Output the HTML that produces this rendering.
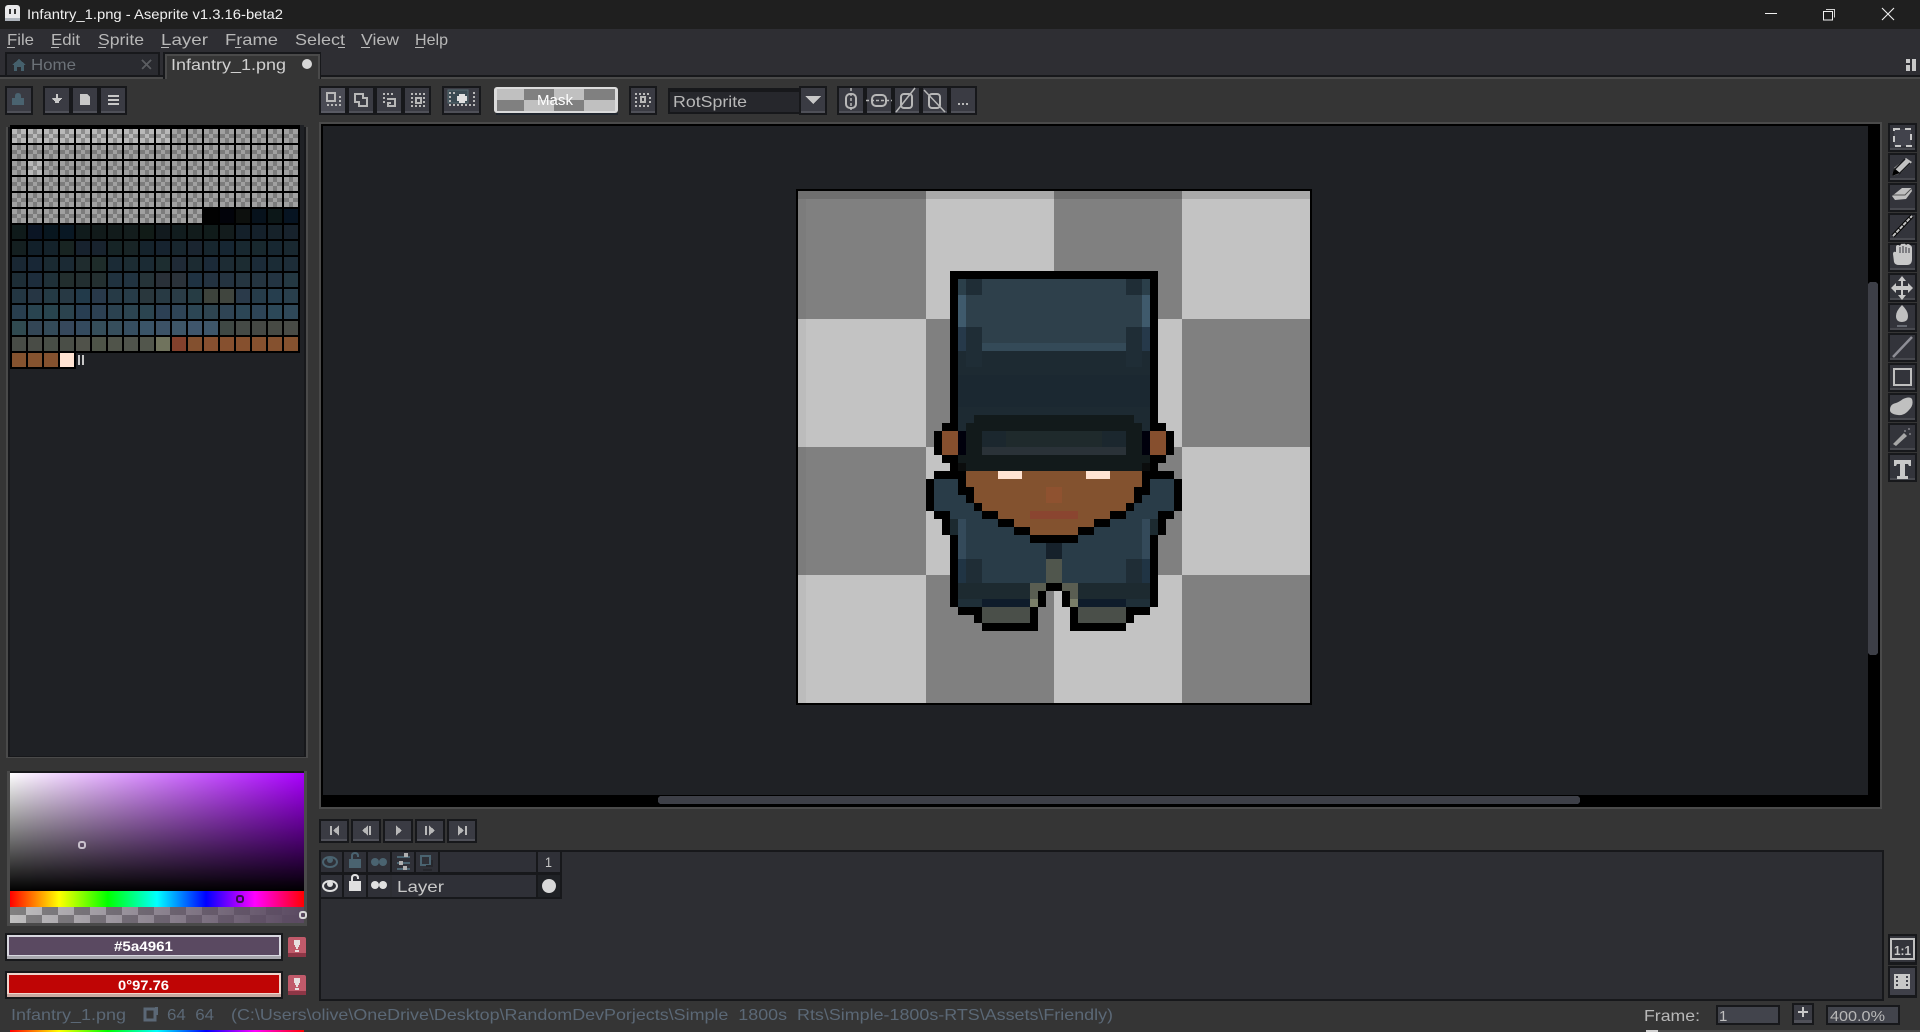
<!DOCTYPE html>
<html><head><meta charset="utf-8"><title>Infantry_1.png - Aseprite v1.3.16-beta2</title>
<style>
html,body{margin:0;padding:0;background:#353535;overflow:hidden}
svg{display:block}
text{font-family:"Liberation Sans",sans-serif;font-size:15px;fill:#b8b8b8;white-space:pre}
.s rect{width:14px;height:14px}
.c{fill:none;stroke:#b8b8b8;stroke-width:2}
</style></head><body>
<svg xmlns="http://www.w3.org/2000/svg" width="1920" height="1032" viewBox="0 0 1920 1032" shape-rendering="crispEdges">
<defs>
<linearGradient id="hue" x1="0" x2="1" y1="0" y2="0"><stop offset="0" stop-color="#f00"/><stop offset=".167" stop-color="#ff0"/><stop offset=".333" stop-color="#0f0"/><stop offset=".5" stop-color="#0ff"/><stop offset=".667" stop-color="#00f"/><stop offset=".833" stop-color="#f0f"/><stop offset="1" stop-color="#f00"/></linearGradient>
<linearGradient id="sv1" x1="0" x2="1" y1="0" y2="0"><stop offset="0" stop-color="#fff"/><stop offset="1" stop-color="#aa00ff"/></linearGradient>
<linearGradient id="sv2" x1="0" x2="0" y1="0" y2="1"><stop offset="0" stop-color="#000" stop-opacity="0"/><stop offset="1" stop-color="#000"/></linearGradient>
<linearGradient id="al" x1="0" x2="1" y1="0" y2="0"><stop offset="0" stop-color="#5a4961" stop-opacity="0"/><stop offset="1" stop-color="#5a4961"/></linearGradient>
<pattern id="alc" width="32" height="16" patternUnits="userSpaceOnUse" x="10" y="907"><rect width="32" height="16" fill="#808080"/><rect x="16" width="16" height="8" fill="#c0c0c0"/><rect y="8" width="16" height="8" fill="#c0c0c0"/></pattern>
<pattern id="sw" width="16" height="16" patternUnits="userSpaceOnUse" x="12" y="129"><rect width="16" height="16" fill="#000"/><rect width="14" height="14" fill="#a0a0a0"/><rect x="5" width="4" height="5" fill="#7c7c7c"/><rect y="5" width="5" height="4" fill="#7c7c7c"/><rect x="9" y="5" width="5" height="4" fill="#7c7c7c"/><rect x="5" y="9" width="4" height="5" fill="#7c7c7c"/></pattern>
<pattern id="sw2" width="16" height="16" patternUnits="userSpaceOnUse" x="12" y="129"><rect width="16" height="16" fill="#000"/><rect width="14" height="14" fill="#b8b8b8"/><rect x="5" width="4" height="5" fill="#8c8c8c"/><rect y="5" width="5" height="4" fill="#8c8c8c"/><rect x="9" y="5" width="5" height="4" fill="#8c8c8c"/><rect x="5" y="9" width="4" height="5" fill="#8c8c8c"/></pattern>
<g id="b"><rect width="28" height="29" fill="#17181b"/><rect x="2" y="2" width="24" height="23" fill="#3a3b43"/><rect x="2" y="25" width="24" height="2" fill="#4f5058"/></g>
<g id="bh"><rect width="28" height="29" fill="#17181b"/><rect x="2" y="2" width="24" height="23" fill="#4a4b54"/><rect x="2" y="25" width="24" height="2" fill="#5a5b64"/></g>
<g id="tb"><rect width="29" height="29" fill="#17181b"/><rect x="2" y="2" width="25" height="25" fill="#33343b"/><rect x="2" y="25" width="25" height="2" fill="#48494f"/></g>
<g id="ab"><rect width="30" height="24" fill="#17181b"/><rect x="2" y="2" width="26" height="18" fill="#3a3b43"/><rect x="2" y="20" width="26" height="2" fill="#4f5058"/></g>
<g id="warn"><rect width="18" height="20" rx="2" fill="#c05a6a" shape-rendering="auto"/><rect y="16" width="18" height="4" fill="#8d3646"/><rect x="6" y="3" width="6" height="5" fill="#e8e0e0"/><rect x="7" y="8" width="4" height="2" fill="#e8e0e0"/><rect x="8" y="10" width="2" height="2" fill="#e8e0e0"/><rect x="7" y="13" width="4" height="2" fill="#e8e0e0"/></g>
</defs>

<!-- backgrounds -->
<rect width="1920" height="1032" fill="#353535"/>
<rect width="1920" height="29" fill="#1f1f1f"/>
<rect y="29" width="1920" height="46" fill="#2e2e33"/>

<!-- title bar -->
<rect x="5" y="5" width="15" height="16" rx="3" fill="#e8e8ea" shape-rendering="auto"/>
<rect x="5" y="18" width="15" height="3" fill="#aeb4bc"/>
<rect x="9" y="9" width="2" height="5" fill="#333"/><rect x="14" y="9" width="2" height="5" fill="#333"/>
<text x="27" y="19" textLength="256" lengthAdjust="spacingAndGlyphs" style="fill:#f0f0f0;font-size:14px">Infantry_1.png - Aseprite v1.3.16-beta2</text>
<rect x="1765" y="13" width="12" height="1" fill="#f0f0f0"/>
<rect x="1823.500" y="11.500" width="9" height="8.500" fill="none" stroke="#f0f0f0"/><path d="M1826 9.500h8.500v8" fill="none" stroke="#d0d0d0"/>
<path d="M1882 8l12 12M1894 8l-12 12" stroke="#f0f0f0" stroke-width="1.100" shape-rendering="auto"/>

<!-- menu -->
<g style="font-size:16px">
<text x="7" y="45" textLength="27" lengthAdjust="spacingAndGlyphs" style="font-size:16px">File</text>
<text x="51" y="45" textLength="29" lengthAdjust="spacingAndGlyphs" style="font-size:16px">Edit</text>
<text x="98" y="45" textLength="46" lengthAdjust="spacingAndGlyphs" style="font-size:16px">Sprite</text>
<text x="161" y="45" textLength="47" lengthAdjust="spacingAndGlyphs" style="font-size:16px">Layer</text>
<text x="225" y="45" textLength="53" lengthAdjust="spacingAndGlyphs" style="font-size:16px">Frame</text>
<text x="295" y="45" textLength="50" lengthAdjust="spacingAndGlyphs" style="font-size:16px">Select</text>
<text x="361" y="45" textLength="38" lengthAdjust="spacingAndGlyphs" style="font-size:16px">View</text>
<text x="415" y="45" textLength="33" lengthAdjust="spacingAndGlyphs" style="font-size:16px">Help</text>
</g>
<g fill="#b8b8b8"><rect x="7" y="47" width="8" height="1"/><rect x="51" y="47" width="8" height="1"/><rect x="98" y="47" width="8" height="1"/><rect x="161" y="47" width="8" height="1"/><rect x="235" y="47" width="6" height="1"/><rect x="338" y="47" width="7" height="1"/><rect x="361" y="47" width="9" height="1"/><rect x="415" y="47" width="9" height="1"/></g>

<!-- tabs -->
<rect x="0" y="75" width="1920" height="2" fill="#17181b"/>
<rect x="0" y="77" width="1920" height="2" fill="#4a4a4a"/>
<rect x="5" y="52" width="155" height="23" fill="#17181b"/>
<rect x="7" y="54" width="151" height="21" fill="#2a2b30"/>
<path d="M12 65l7-6 7 6h-2v6h-3v-4h-4v4h-3v-6z" fill="#45606c"/>
<text x="31" y="70" textLength="45" lengthAdjust="spacingAndGlyphs" style="fill:#6c7278;font-size:16px">Home</text>
<path d="M142 60l9 9M151 60l-9 9" stroke="#5a5c60" stroke-width="1.500"/>
<rect x="163" y="52" width="158" height="27" fill="#17181b"/>
<rect x="165" y="54" width="155" height="25" fill="#4a4a4a"/>
<rect x="167" y="56" width="151" height="23" fill="#353535"/>
<text x="171" y="70" textLength="115" lengthAdjust="spacingAndGlyphs" style="fill:#d0d0d0;font-size:16px">Infantry_1.png</text>
<circle cx="307" cy="64" r="5" fill="#d8d8d8" shape-rendering="auto"/>
<g fill="#c8c8c8"><rect x="1906" y="59" width="4" height="4"/><rect x="1906" y="65" width="4" height="6"/><rect x="1912" y="59" width="4" height="12"/></g>

<!-- left toolbar -->
<use href="#b" x="5" y="86"/>
<path d="M15 98v-2q0-3 3-3t3 3v2h3v7h-12v-7z" fill="#4a6370" shape-rendering="auto"/>
<use href="#b" x="43" y="86"/><use href="#b" x="71" y="86"/><use href="#b" x="99" y="86"/>
<g fill="#c8c8c8"><rect x="56" y="94" width="2" height="9"/><path d="M52 98h10v1h-1v1h-1v1h-1v2h-4v-2h-1v-1h-1z"/><path d="M80 94h7l3 3v8h-10z"/><rect x="108" y="95" width="11" height="2"/><rect x="108" y="99" width="11" height="2"/><rect x="108" y="103" width="11" height="2"/></g>

<!-- top toolbar -->
<use href="#bh" x="319" y="86"/><use href="#b" x="347" y="86"/><use href="#b" x="375" y="86"/><use href="#b" x="403" y="86"/>
<rect x="327" y="93" width="8" height="8" class="c"/>
<path d="M327 105h2M331 105h2M335 105h2M339 105h2M339 101h2M339 97h2" stroke="#b8b8b8" stroke-width="2"/>
<path d="M355 94h8v4h4v8h-8v-4h-4z" class="c"/>
<path d="M383 94h2M387 94h2M391 94h2M383 98h2M383 102h2" stroke="#b8b8b8" stroke-width="2"/><path d="M387 99h8v7h-7v-3h3" class="c"/>
<path d="M411 94h14M411 98h2M423 98h2M411 102h2M423 102h2M411 106h14" stroke="#b8b8b8" stroke-width="2" stroke-dasharray="2 2"/><rect x="416" y="98" width="5" height="5" class="c"/>
<rect x="442" y="86" width="39" height="29" fill="#17181b"/><rect x="444" y="88" width="35" height="23" fill="#3a3b43"/><rect x="444" y="111" width="35" height="2" fill="#4f5058"/>
<rect x="448" y="90" width="20" height="13" fill="#3a4a52" stroke="#54686f"/>
<path d="M449 93h2M453 93h2M473 93h2M449 97h2M473 97h2M449 101h2M473 101h2M449 105h26" stroke="#b8b8b8" stroke-width="2" stroke-dasharray="2 2"/>
<rect x="459" y="94" width="6" height="9" fill="#e0e0e0"/><rect x="457" y="96" width="10" height="5" fill="#e0e0e0"/>

<!-- mask button -->
<rect x="494" y="87" width="124" height="26" rx="3" fill="#dcdcdc" shape-rendering="auto"/>
<rect x="496" y="113" width="122" height="2" fill="#20262e"/>
<rect x="497" y="89" width="118" height="22" fill="#c0c0c0"/>
<rect x="524" y="89" width="30" height="11" fill="#808080"/><rect x="584" y="89" width="31" height="11" fill="#808080"/>
<rect x="497" y="100" width="27" height="11" fill="#808080"/><rect x="554" y="100" width="30" height="11" fill="#808080"/>
<text x="537" y="105" textLength="36" lengthAdjust="spacingAndGlyphs" style="fill:#fff;font-size:15px">Mask</text>

<use href="#b" x="629" y="86"/>
<path d="M635 94h16M635 98h2M649 98h2M635 102h2M649 102h2M635 106h16" stroke="#b8b8b8" stroke-width="2" stroke-dasharray="2 2"/><rect x="641" y="97" width="4" height="5" class="c"/>

<!-- rotsprite -->
<rect x="668" y="88" width="132" height="26" fill="#17181b"/><rect x="670" y="92" width="129" height="20" fill="#26272c"/>
<text x="673" y="107" textLength="74" lengthAdjust="spacingAndGlyphs" style="fill:#b8b8b8;font-size:16px">RotSprite</text>
<use href="#b" x="799" y="86"/>
<path d="M805 96h16l-8 8z" fill="#c8c8c8"/>

<use href="#b" x="837" y="86"/><use href="#b" x="865" y="86"/><use href="#b" x="893" y="86"/><use href="#b" x="921" y="86"/><use href="#b" x="949" y="86"/>
<g shape-rendering="auto">
<rect x="846" y="94" width="10" height="14" rx="4" class="c"/><path d="M851 88v22" stroke="#b8b8b8" stroke-width="1.500" stroke-dasharray="3 2"/>
<rect x="872" y="95" width="14" height="11" rx="4" class="c"/><path d="M866 100.500h26" stroke="#b8b8b8" stroke-width="1.500" stroke-dasharray="3 2"/>
<rect x="901" y="94" width="11" height="14" rx="3" class="c"/><path d="M896 112l19-24" stroke="#b8b8b8" stroke-width="1.500"/>
<rect x="929" y="94" width="11" height="14" rx="3" class="c"/><path d="M924 90l21 22" stroke="#b8b8b8" stroke-width="1.500"/>
</g>
<g fill="#b8b8b8"><rect x="958" y="103" width="2" height="2"/><rect x="962" y="103" width="2" height="2"/><rect x="966" y="103" width="2" height="2"/></g>

<!-- palette panel -->
<rect x="6" y="127" width="302" height="631" fill="#4a4a4a"/>
<rect x="8" y="127" width="298" height="630" fill="#17181b"/>
<rect x="10" y="125" width="294" height="631" fill="#1f2125"/>
<rect x="10" y="125" width="290" height="228" fill="#000"/>
<rect x="10" y="353" width="66" height="16" fill="#000"/>
<rect x="12" y="129" width="286" height="94" fill="url(#sw)"/>
<rect x="12" y="129" width="158" height="14" fill="url(#sw2)"/>
<rect x="28" y="161" width="14" height="14" fill="url(#sw2)"/>
<rect x="204" y="209" width="96" height="16" fill="#000"/>
<g class="s" transform="translate(0,209)"><rect x="204" fill="#010101"/><rect x="220" fill="#02030a"/><rect x="236" fill="#0d100e"/><rect x="252" fill="#07121c"/><rect x="268" fill="#0c1718"/><rect x="284" fill="#071422"/></g>
<g class="s" transform="translate(0,225)"><rect x="12" fill="#0f1a1a"/><rect x="28" fill="#0b1524"/><rect x="44" fill="#08161f"/><rect x="60" fill="#091824"/><rect x="76" fill="#101b1c"/><rect x="92" fill="#111a1a"/><rect x="108" fill="#121b1b"/><rect x="124" fill="#131c1c"/><rect x="140" fill="#111b17"/><rect x="156" fill="#121a1e"/><rect x="172" fill="#111c1e"/><rect x="188" fill="#121c1c"/><rect x="204" fill="#101b1a"/><rect x="220" fill="#131c1d"/><rect x="236" fill="#14202a"/><rect x="252" fill="#14202a"/><rect x="268" fill="#16222a"/><rect x="284" fill="#17222c"/></g>
<g class="s" transform="translate(0,241)"><rect x="12" fill="#141f20"/><rect x="28" fill="#12202a"/><rect x="44" fill="#14222a"/><rect x="60" fill="#182422"/><rect x="76" fill="#17222e"/><rect x="92" fill="#18232e"/><rect x="108" fill="#162426"/><rect x="124" fill="#182426"/><rect x="140" fill="#15232c"/><rect x="156" fill="#16232f"/><rect x="172" fill="#18262e"/><rect x="188" fill="#1a2530"/><rect x="204" fill="#17262e"/><rect x="220" fill="#162632"/><rect x="236" fill="#182830"/><rect x="252" fill="#18282e"/><rect x="268" fill="#172731"/><rect x="284" fill="#192830"/></g>
<g class="s" transform="translate(0,257)"><rect x="12" fill="#192733"/><rect x="28" fill="#182736"/><rect x="44" fill="#1a2a32"/><rect x="60" fill="#1b2a34"/><rect x="76" fill="#1f2c2e"/><rect x="92" fill="#1e2c2a"/><rect x="108" fill="#1b2b36"/><rect x="124" fill="#1c2c33"/><rect x="140" fill="#1b2b34"/><rect x="156" fill="#1d2d30"/><rect x="172" fill="#1f2a36"/><rect x="188" fill="#1c2b32"/><rect x="204" fill="#1b2a38"/><rect x="220" fill="#1d2c34"/><rect x="236" fill="#1c2c32"/><rect x="252" fill="#1b2b38"/><rect x="268" fill="#1b2c36"/><rect x="284" fill="#1d2d38"/></g>
<g class="s" transform="translate(0,273)"><rect x="12" fill="#1d2d36"/><rect x="28" fill="#1d2d3c"/><rect x="44" fill="#1f3038"/><rect x="60" fill="#222e2e"/><rect x="76" fill="#222e30"/><rect x="92" fill="#232f30"/><rect x="108" fill="#20323f"/><rect x="124" fill="#213340"/><rect x="140" fill="#253338"/><rect x="156" fill="#293038"/><rect x="172" fill="#2a323a"/><rect x="188" fill="#1f3242"/><rect x="204" fill="#233240"/><rect x="220" fill="#243340"/><rect x="236" fill="#253540"/><rect x="252" fill="#243440"/><rect x="268" fill="#233442"/><rect x="284" fill="#243842"/></g>
<g class="s" transform="translate(0,289)"><rect x="12" fill="#233642"/><rect x="28" fill="#263644"/><rect x="44" fill="#243a44"/><rect x="60" fill="#273944"/><rect x="76" fill="#223a4a"/><rect x="92" fill="#28394a"/><rect x="108" fill="#263a46"/><rect x="124" fill="#273c48"/><rect x="140" fill="#29373d"/><rect x="156" fill="#283a44"/><rect x="172" fill="#2a3c46"/><rect x="188" fill="#263c44"/><rect x="204" fill="#3d433c"/><rect x="220" fill="#40453e"/><rect x="236" fill="#2a3a4a"/><rect x="252" fill="#263c4a"/><rect x="268" fill="#263e4e"/><rect x="284" fill="#293f4c"/></g>
<g class="s" transform="translate(0,305)"><rect x="12" fill="#283e4e"/><rect x="28" fill="#294450"/><rect x="44" fill="#28444e"/><rect x="60" fill="#2b434e"/><rect x="76" fill="#283e52"/><rect x="92" fill="#2c4052"/><rect x="108" fill="#2b4250"/><rect x="124" fill="#2c4450"/><rect x="140" fill="#2b4450"/><rect x="156" fill="#2c4054"/><rect x="172" fill="#2e4456"/><rect x="188" fill="#2c4654"/><rect x="204" fill="#2e4450"/><rect x="220" fill="#2f4454"/><rect x="236" fill="#2c4656"/><rect x="252" fill="#2d4456"/><rect x="268" fill="#2c4858"/><rect x="284" fill="#2f4858"/></g>
<g class="s" transform="translate(0,321)"><rect x="12" fill="#304a50"/><rect x="28" fill="#334656"/><rect x="44" fill="#334a58"/><rect x="60" fill="#36485c"/><rect x="76" fill="#344a5e"/><rect x="92" fill="#354e5a"/><rect x="108" fill="#364e5c"/><rect x="124" fill="#364e60"/><rect x="140" fill="#3a5468"/><rect x="156" fill="#3c5266"/><rect x="172" fill="#3e5668"/><rect x="188" fill="#3f566c"/><rect x="204" fill="#3e566a"/><rect x="220" fill="#3f4844"/><rect x="236" fill="#454a46"/><rect x="252" fill="#454844"/><rect x="268" fill="#474a44"/><rect x="284" fill="#484b46"/></g>
<g class="s" transform="translate(0,337)"><rect x="12" fill="#484c46"/><rect x="28" fill="#494c46"/><rect x="44" fill="#484e46"/><rect x="60" fill="#4a4e47"/><rect x="76" fill="#50524a"/><rect x="92" fill="#4e5448"/><rect x="108" fill="#50544a"/><rect x="124" fill="#50544c"/><rect x="140" fill="#52564c"/><rect x="156" fill="#70735d"/><rect x="172" fill="#83402c"/><rect x="188" fill="#83502f"/><rect x="204" fill="#875030"/><rect x="220" fill="#86502f"/><rect x="236" fill="#86502e"/><rect x="252" fill="#86512f"/><rect x="268" fill="#85512f"/><rect x="284" fill="#85522f"/></g>
<g class="s" transform="translate(0,353)"><rect x="12" fill="#85532f"/><rect x="28" fill="#85532f"/><rect x="44" fill="#85522f"/><rect x="60" fill="#ffe3d2"/></g>
<rect x="78" y="355" width="2" height="10" fill="#c8c8c8"/><rect x="82" y="355" width="2" height="10" fill="#c8c8c8"/>

<!-- color selector -->
<rect x="7" y="771" width="300" height="155" fill="#4a4a4a"/>
<rect x="10" y="771" width="294" height="2" fill="#17181b"/>
<rect x="10" y="773" width="294" height="118" fill="url(#sv1)"/>
<rect x="10" y="773" width="294" height="118" fill="url(#sv2)"/>
<rect x="10" y="891" width="294" height="16" fill="url(#hue)"/>
<rect x="10" y="907" width="294" height="16" fill="url(#alc)"/>
<rect x="10" y="907" width="294" height="16" fill="url(#al)"/>
<g shape-rendering="auto">
<rect x="79" y="842" width="6" height="6" rx="2" fill="none" stroke="#c8c0cc" stroke-width="2"/>
<rect x="237" y="896" width="6" height="6" rx="2" fill="none" stroke="#3a0a50" stroke-width="2"/>
<rect x="300" y="912" width="6" height="6" rx="2" fill="none" stroke="#d8d8d8" stroke-width="2"/>
</g>

<rect x="5" y="933" width="278" height="28" fill="#17181b"/>
<rect x="7" y="935" width="274" height="23" fill="#d8d8e0"/>
<rect x="7" y="956" width="274" height="3" fill="#a8a8ae"/>
<rect x="9" y="937" width="270" height="18" fill="#5a4961"/>
<text x="114" y="951" textLength="59" lengthAdjust="spacingAndGlyphs" style="fill:#fff;font-size:14px;font-weight:bold">#5a4961</text>
<use href="#warn" x="288" y="937"/>

<rect x="5" y="971" width="278" height="28" fill="#17181b"/>
<rect x="7" y="973" width="274" height="23" fill="#f0d4cc"/>
<rect x="7" y="994" width="274" height="3" fill="#c8a8a0"/>
<rect x="9" y="975" width="270" height="18" fill="#bf0505"/>
<text x="118" y="990" textLength="51" lengthAdjust="spacingAndGlyphs" style="fill:#fff;font-size:14px;font-weight:bold">0°97.76</text>
<use href="#warn" x="288" y="975"/>

<!-- editor -->
<rect x="319" y="122" width="1563" height="687" fill="#4a4a4a"/>
<rect x="321" y="124" width="1559" height="683" fill="#000"/>
<rect x="323" y="126" width="1545" height="669" fill="#1f2125"/>
<rect x="658" y="796" width="922" height="8" rx="3" fill="#3d3f47"/>
<rect x="1868" y="282" width="10" height="373" rx="3" fill="#3d3f47"/>

<!-- canvas -->
<rect x="796" y="189" width="516" height="516" fill="#000"/>
<rect x="798" y="191" width="512" height="512" fill="#c3c3c3"/>
<g fill="#808080">
<rect x="798" y="191" width="128" height="128"/><rect x="1054" y="191" width="128" height="128"/>
<rect x="926" y="319" width="128" height="128"/><rect x="1182" y="319" width="128" height="128"/>
<rect x="798" y="447" width="128" height="128"/><rect x="1054" y="447" width="128" height="128"/>
<rect x="926" y="575" width="128" height="128"/><rect x="1182" y="575" width="128" height="128"/>
</g>
<rect x="798" y="191" width="512" height="8" fill="#000" opacity=".13"/>
<rect x="798" y="199" width="8" height="504" fill="#000" opacity=".03"/>

<!-- sprite -->
<g transform="translate(798,191) scale(8)">
<rect x="19" y="10" width="26" height="25" fill="#000"/>
<rect x="20" y="11" width="24" height="9" fill="#2e404b"/>
<rect x="20" y="20" width="24" height="14" fill="#1d2a32"/>
<rect x="20" y="23" width="24" height="4" fill="#1b2831"/>
<rect x="20" y="11" width="1" height="2" fill="#2b3f4a"/><rect x="43" y="11" width="1" height="2" fill="#2b3f4a"/>
<rect x="20" y="13" width="1" height="4" fill="#3f5a6c"/><rect x="43" y="13" width="1" height="4" fill="#3f5a6c"/>
<rect x="20" y="17" width="1" height="3" fill="#26394a"/><rect x="43" y="17" width="1" height="3" fill="#26394a"/>
<g fill="#1f2d36"><rect x="21" y="11" width="2" height="2"/><rect x="41" y="11" width="2" height="2"/><rect x="21" y="17" width="2" height="5"/><rect x="41" y="17" width="2" height="5"/></g>
<rect x="23" y="19" width="18" height="1" fill="#344a58"/>
<!-- brim -->
<g fill="#121a1b"><rect x="22" y="28" width="20" height="1"/><rect x="21" y="29" width="22" height="4"/><rect x="20" y="33" width="24" height="1"/><rect x="21" y="34" width="22" height="1"/></g>
<rect x="20" y="34" width="1" height="1" fill="#0b0d0d"/><rect x="43" y="34" width="1" height="1" fill="#0b0d0d"/>
<rect x="23" y="30" width="18" height="2" fill="#1f2a2c"/>
<rect x="23" y="32" width="18" height="1" fill="#2a3238"/>
<rect x="23" y="30" width="3" height="2" fill="#1b272e"/><rect x="38" y="30" width="3" height="2" fill="#1b272e"/>
<!-- ears -->
<g fill="#000"><rect x="18" y="29" width="2" height="1"/><rect x="17" y="30" width="1" height="3"/><rect x="18" y="33" width="2" height="1"/><rect x="44" y="29" width="2" height="1"/><rect x="46" y="30" width="1" height="3"/><rect x="44" y="33" width="2" height="1"/></g>
<rect x="20" y="30" width="1" height="3" fill="#00000c"/><rect x="43" y="30" width="1" height="3" fill="#00000c"/>
<rect x="18" y="30" width="2" height="3" fill="#864f2e"/><rect x="44" y="30" width="2" height="3" fill="#864f2e"/>
<!-- body -->
<rect x="17" y="36" width="30" height="4" fill="#293c48"/>
<rect x="19" y="40" width="26" height="10" fill="#293c48"/>
<rect x="19" y="50" width="12" height="2" fill="#293c48"/><rect x="33" y="50" width="12" height="2" fill="#293c48"/>
<g fill="#1c2a30"><rect x="19" y="41" width="1" height="2"/><rect x="44" y="41" width="1" height="2"/></g>
<g fill="#344a5a"><rect x="20" y="41" width="1" height="5"/><rect x="43" y="41" width="1" height="5"/></g>
<g fill="#203444"><rect x="20" y="46" width="1" height="3"/><rect x="43" y="46" width="1" height="3"/></g>
<g fill="#1f2d36"><rect x="21" y="46" width="2" height="3"/><rect x="41" y="46" width="2" height="3"/></g>
<g fill="#1d2a30"><rect x="20" y="49" width="9" height="2"/><rect x="35" y="49" width="9" height="2"/></g>
<g fill="#1f2f38"><rect x="20" y="51" width="3" height="1"/><rect x="41" y="51" width="3" height="1"/></g>
<g fill="#0f1c2b"><rect x="23" y="51" width="6" height="1"/><rect x="35" y="51" width="6" height="1"/></g>
<rect x="31" y="44" width="2" height="2" fill="#16212b"/>
<rect x="31" y="46" width="2" height="3" fill="#50564d"/>
<g fill="#5a5e52"><rect x="29" y="49" width="2" height="1"/><rect x="33" y="49" width="2" height="1"/><rect x="29" y="50" width="1" height="1"/><rect x="34" y="50" width="1" height="1"/></g>
<g fill="#7a7e68"><rect x="29" y="51" width="1" height="1"/><rect x="34" y="51" width="1" height="1"/></g>
<g fill="#4a4f49"><rect x="23" y="52" width="6" height="2"/><rect x="35" y="52" width="6" height="2"/></g>
<!-- outline -->
<g fill="#000">
<rect x="17" y="35" width="4" height="1"/><rect x="43" y="35" width="4" height="1"/>
<rect x="16" y="36" width="1" height="4"/><rect x="47" y="36" width="1" height="4"/>
<rect x="17" y="40" width="2" height="1"/><rect x="45" y="40" width="2" height="1"/>
<rect x="18" y="41" width="1" height="2"/><rect x="45" y="41" width="1" height="2"/>
<rect x="19" y="43" width="1" height="9"/><rect x="44" y="43" width="1" height="9"/>
<rect x="20" y="52" width="3" height="1"/><rect x="41" y="52" width="3" height="1"/>
<rect x="22" y="53" width="1" height="1"/><rect x="41" y="53" width="1" height="1"/>
<rect x="23" y="54" width="7" height="1"/><rect x="34" y="54" width="7" height="1"/>
<rect x="29" y="52" width="1" height="2"/><rect x="34" y="52" width="1" height="2"/>
<rect x="31" y="49" width="2" height="1"/>
<rect x="30" y="50" width="1" height="2"/><rect x="33" y="50" width="1" height="2"/>
<rect x="20" y="36" width="1" height="2"/><rect x="43" y="36" width="1" height="2"/>
<rect x="21" y="37" width="1" height="2"/><rect x="42" y="37" width="1" height="2"/>
<rect x="22" y="39" width="1" height="1"/><rect x="41" y="39" width="1" height="1"/>
<rect x="23" y="40" width="2" height="1"/><rect x="39" y="40" width="2" height="1"/>
<rect x="25" y="41" width="2" height="1"/><rect x="37" y="41" width="2" height="1"/>
<rect x="27" y="42" width="2" height="1"/><rect x="35" y="42" width="2" height="1"/>
<rect x="29" y="43" width="6" height="1"/>
</g>
<!-- face -->
<g fill="#83522f"><rect x="21" y="35" width="22" height="2"/><rect x="22" y="37" width="20" height="2"/><rect x="23" y="39" width="18" height="1"/><rect x="25" y="40" width="14" height="1"/><rect x="27" y="41" width="10" height="1"/><rect x="29" y="42" width="6" height="1"/></g>
<rect x="25" y="35" width="3" height="1" fill="#ffe3d2"/><rect x="36" y="35" width="3" height="1" fill="#ffe3d2"/>
<rect x="31" y="37" width="2" height="2" fill="#8f5230"/>
<rect x="29" y="40" width="6" height="1" fill="#8a4530"/>
</g>

<!-- tools -->
<g><use href="#tb" x="1888" y="123"/><use href="#tb" x="1888" y="153"/><use href="#tb" x="1888" y="183"/><use href="#tb" x="1888" y="213"/><use href="#tb" x="1888" y="243"/><use href="#tb" x="1888" y="273"/><use href="#tb" x="1888" y="303"/><use href="#tb" x="1888" y="333"/><use href="#tb" x="1888" y="363"/><use href="#tb" x="1888" y="393"/><use href="#tb" x="1888" y="423"/><use href="#tb" x="1888" y="453"/></g>
<rect x="1894" y="129" width="17" height="17" fill="#42434c"/>
<rect x="1894" y="129" width="17" height="17" fill="none" stroke="#c8c8c8" stroke-width="2" stroke-dasharray="6 5"/>
<g shape-rendering="auto">
<path d="M1906 158l6 4-11 11-9 3 2-8z" fill="#c0c0c0"/><path d="M1892 176l2-8 6 5z" fill="#000"/><path d="M1894 170l11-11" stroke="#17181b" stroke-width="1.500"/><path d="M1899 174l11-11" stroke="#17181b" stroke-width="1.500"/>
<path d="M1902 188h9l1 3-6 8-11 1-3-4z" fill="#c0c0c0"/><path d="M1893 195h12l6-6" stroke="#555" fill="none"/>
<path d="M1893 236l19-20" stroke="#000" stroke-width="4"/><path d="M1893 236l19-20" stroke="#c0c0c0" stroke-width="2" stroke-dasharray="4 1"/>
<path d="M1893 254q0-3 3-2v-5q0-2 2-2 1 0 2 1 1-3 3-2 2-1 3 1 2-2 4 0 2 1 2 3v11q0 6-5 6h-8q-4 0-5-3z" fill="#c8c8c8"/><path d="M1900 247v6M1903 246v7M1906 247v6M1909 248v5" stroke="#33343b"/>
<path d="M1902 283l-4 5h3v5h-5v-3l-5 5 5 5v-3h5v5h-3l4 5 4-5h-3v-5h5v3l5-5-5-5v3h-5v-5h3z" fill="#c8c8c8" transform="translate(0,-7)"/>
<path d="M1902 305q6 6 6 11 0 6-6 6t-6-6q0-5 6-11z" fill="#c0c0c0"/>
<rect x="1897" y="325" width="10" height="2" fill="#666a72"/>
<path d="M1912 337l-19 20" stroke="#8e8e96" stroke-width="2.500"/>
<path d="M1890 410q0-6 6-7 3-1 7-4 7-3 9 0 2 6-3 11-5 6-11 5-8-1-8-5z" fill="#c0c0c0"/>
<path d="M1893 444l11-11 3 3-11 10z" fill="#a8a8a8"/>
</g>
<rect x="1894" y="369" width="17" height="16" fill="none" stroke="#c0c0c0" stroke-width="2"/>
<g fill="#6e6e74"><rect x="1904" y="430" width="2" height="2"/><rect x="1908" y="428" width="2" height="2"/><rect x="1909" y="433" width="2" height="2"/></g>
<path d="M1894 460h17v6h-2l-1-2h-3v12h3v3h-11v-3h3v-12h-3l-1 2h-2z" fill="#c8c8c8"/>

<!-- animation -->
<use href="#ab" x="319" y="819"/><use href="#ab" x="351" y="819"/><use href="#ab" x="383" y="819"/><use href="#ab" x="415" y="819"/><use href="#ab" x="447" y="819"/>
<g fill="#b8b8b8">
<rect x="330" y="826" width="2" height="9"/><path d="M333 830.500l6-5v10z"/>
<path d="M362 830.500l6-5v10z"/><rect x="369" y="826" width="2" height="9"/>
<path d="M396 825.500l6 5-6 5z"/>
<rect x="425" y="826" width="2" height="9"/><path d="M429 825.500l6 5-6 5z"/>
<path d="M458 825.500l6 5-6 5z"/><rect x="465" y="826" width="2" height="9"/>
</g>

<!-- timeline -->
<rect x="319" y="850" width="1565" height="151" fill="#17181b"/>
<rect x="321" y="852" width="1561" height="147" fill="#2d2e33"/>
<rect x="319" y="872" width="242" height="3" fill="#17181b"/>
<rect x="319" y="897" width="242" height="2" fill="#17181b"/>
<rect x="560" y="850" width="2" height="49" fill="#17181b"/>
<g fill="#2f3037"><rect x="321" y="852" width="21" height="20"/><rect x="344" y="852" width="22" height="20"/><rect x="368" y="852" width="22" height="20"/><rect x="392" y="852" width="22" height="20"/><rect x="416" y="852" width="22" height="20"/><rect x="440" y="852" width="96" height="20"/><rect x="538" y="852" width="22" height="20"/>
<rect x="321" y="875" width="21" height="22"/><rect x="344" y="875" width="22" height="22"/><rect x="368" y="875" width="22" height="22"/><rect x="392" y="875" width="144" height="22"/></g>
<rect x="538" y="875" width="22" height="22" fill="#1f2125"/>
<g fill="#17181b"><rect x="342" y="852" width="2" height="45"/><rect x="366" y="852" width="2" height="45"/><rect x="390" y="852" width="2" height="20"/><rect x="414" y="852" width="2" height="20"/><rect x="438" y="852" width="2" height="20"/><rect x="536" y="852" width="2" height="45"/></g>
<g shape-rendering="auto">
<ellipse cx="330" cy="862" rx="7" ry="5" fill="none" stroke="#4a6370" stroke-width="2"/><circle cx="330" cy="860" r="3" fill="#4a6370"/>
<path d="M352 859v-3q0-3 3-3 3 0 3 3v1" fill="none" stroke="#4a6370" stroke-width="2"/><rect x="349" y="859" width="12" height="9" fill="#4a6370"/>
<circle cx="375" cy="862" r="4" fill="#4a6370"/><circle cx="383" cy="862" r="4" fill="#4a6370"/>
<ellipse cx="330" cy="886" rx="7" ry="5" fill="none" stroke="#e0e0e0" stroke-width="2"/><circle cx="330" cy="884" r="3" fill="#e0e0e0"/>
<path d="M352 881v-3q0-3 3-3 3 0 3 3v1" fill="none" stroke="#e0e0e0" stroke-width="2"/><rect x="349" y="881" width="12" height="10" fill="#e0e0e0"/>
<circle cx="375" cy="885" r="4" fill="#e0e0e0"/><circle cx="383" cy="885" r="4" fill="#e0e0e0"/>
<circle cx="549" cy="886" r="7" fill="#d8d8d8"/>
</g>
<g fill="#4a6370"><rect x="397" y="856" width="13" height="2"/><rect x="397" y="862" width="13" height="2"/><rect x="397" y="868" width="13" height="2"/></g>
<g fill="#b0b0b0"><rect x="404" y="853" width="4" height="4"/><rect x="399" y="861" width="4" height="4"/><rect x="403" y="866" width="4" height="4"/></g>
<rect x="421" y="856" width="9" height="9" fill="none" stroke="#4a6370" stroke-width="2"/><path d="M432 860v6h-6" fill="none" stroke="#26272c" stroke-width="2"/><path d="M423 870h9" stroke="#26272c" stroke-width="2"/>
<text x="397" y="892" textLength="47" lengthAdjust="spacingAndGlyphs" style="fill:#c8c8c8;font-size:16px">Layer</text>
<text x="545" y="867" textLength="7" lengthAdjust="spacingAndGlyphs" style="fill:#c8c8c8;font-size:14px">1</text>

<!-- right side bottom buttons -->
<rect x="1888" y="934" width="29" height="31" fill="#17181b"/><rect x="1890" y="936" width="25" height="26" fill="#33343b"/>
<rect x="1891" y="939" width="23" height="20" fill="none" stroke="#c0c0c0" stroke-width="2"/>
<text x="1894" y="955" textLength="17" lengthAdjust="spacingAndGlyphs" style="fill:#c8c8c8;font-size:13px;font-weight:bold">1:1</text>
<rect x="1888" y="966" width="29" height="32" fill="#17181b"/><rect x="1890" y="968" width="25" height="27" fill="#3f4049"/>
<rect x="1894" y="974" width="16" height="15" fill="#c8c8c8"/>
<g fill="#3f4049"><rect x="1896" y="976" width="2" height="2"/><rect x="1896" y="980" width="2" height="2"/><rect x="1896" y="984" width="2" height="2"/><rect x="1906" y="976" width="2" height="2"/><rect x="1906" y="980" width="2" height="2"/><rect x="1906" y="984" width="2" height="2"/></g>

<!-- status bar -->
<text x="11" y="1020" textLength="115" lengthAdjust="spacingAndGlyphs" style="fill:#5b6876;font-size:16px">Infantry_1.png</text>
<rect x="145" y="1009" width="10" height="11" fill="none" stroke="#5b6876" stroke-width="3"/><rect x="155" y="1007" width="3" height="8" fill="#5b6876"/>
<text x="167" y="1020" textLength="47" lengthAdjust="spacingAndGlyphs" style="fill:#5b6876;font-size:16px">64  64</text>
<text x="231" y="1020" textLength="882" lengthAdjust="spacingAndGlyphs" style="fill:#5b6876;font-size:16px">(C:\Users\olive\OneDrive\Desktop\RandomDevPorjects\Simple  1800s  Rts\Simple-1800s-RTS\Assets\Friendly)</text>
<text x="1644" y="1021" textLength="56" lengthAdjust="spacingAndGlyphs" style="fill:#b8b8b8;font-size:16px">Frame:</text>
<rect x="1716" y="1005" width="64" height="20" fill="#17181b"/><rect x="1718" y="1007" width="60" height="16" fill="#42444c"/>
<text x="1719" y="1021" style="fill:#c0c0c0;font-size:15px">1</text>
<rect x="1792" y="1003" width="22" height="22" fill="#17181b"/><rect x="1794" y="1005" width="18" height="15" fill="#3a3b43"/><rect x="1794" y="1020" width="18" height="3" fill="#4f5058"/>
<rect x="1798" y="1011" width="10" height="2" fill="#c8c8c8"/><rect x="1802" y="1007" width="2" height="10" fill="#c8c8c8"/>
<rect x="1826" y="1005" width="74" height="20" fill="#17181b"/><rect x="1828" y="1007" width="70" height="16" fill="#42444c"/>
<text x="1830" y="1021" textLength="55" lengthAdjust="spacingAndGlyphs" style="fill:#b8b8b8;font-size:15px">400.0%</text>
<rect x="10" y="1030" width="294" height="2" fill="url(#hue)"/>
<rect x="1646" y="1030" width="12" height="2" fill="#d0d0d0"/><rect x="1658" y="1030" width="262" height="2" fill="#4a4a4a"/>
</svg>
</body></html>
